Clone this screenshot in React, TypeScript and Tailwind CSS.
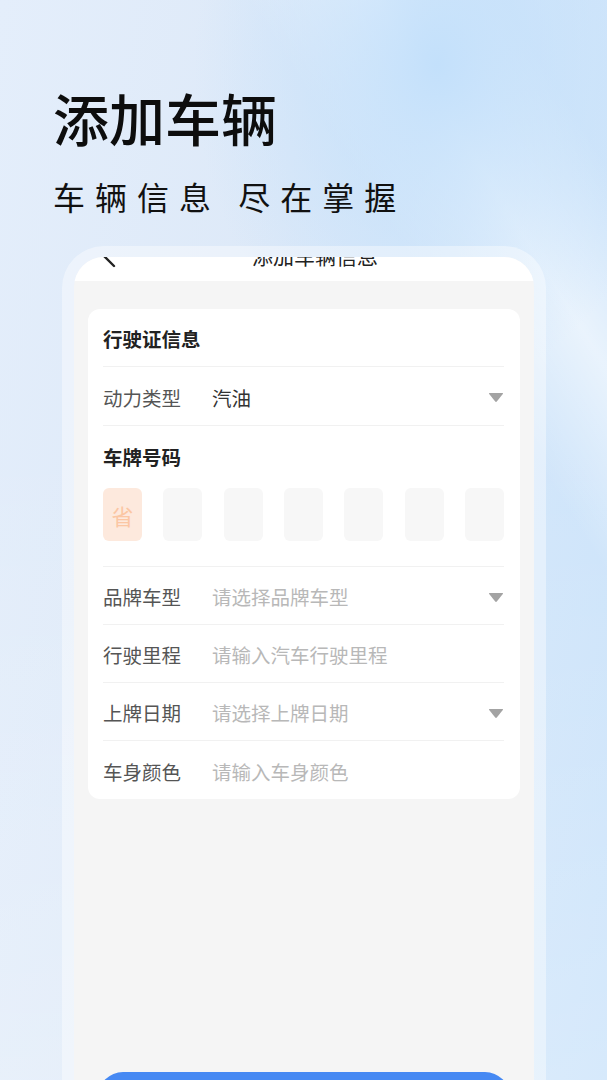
import React from "react";

const FONT = { fontFamily: '"Noto Sans CJK SC", "Noto Sans", sans-serif' };

function Caret() {
  return (
    <svg width="16" height="11" viewBox="0 0 16 11" className="shrink-0">
      <path d="M1.5 1 H14.5 Q15.5 1 14.8 2 L8.8 9.6 Q8 10.5 7.2 9.6 L1.2 2 Q0.5 1 1.5 1 Z" fill="#a3a3a3" />
    </svg>
  );
}

function Row({
  label,
  value,
  placeholder,
  caret,
  last,
  h = "h-[58px]",
}: {
  label: string;
  value?: string;
  placeholder?: string;
  caret?: boolean;
  last?: boolean;
  h?: string;
}) {
  return (
    <div className={`flex items-center pt-[3px] ${h} ${last ? "" : "border-b border-[#f1f1f1]"}`}>
      <div className="w-[109px] shrink-0 text-[19.5px] text-[#555555] leading-none">{label}</div>
      <div className="flex-1 text-[19.5px] leading-none">
        {value ? (
          <span className="text-[#333333]">{value}</span>
        ) : (
          <span className="text-[#b8b8b8]">{placeholder}</span>
        )}
      </div>
      {caret && <Caret />}
    </div>
  );
}

export default function App() {
  return (
    <div
      className="relative w-full h-[1080px] overflow-hidden flex flex-col bg-[radial-gradient(ellipse_40%_30%_at_72%_6%,#c3e0fb_0%,rgba(195,224,251,0)_100%),linear-gradient(58deg,rgba(255,255,255,0)_72%,rgba(255,255,255,0.55)_82%,rgba(255,255,255,0)_92%),linear-gradient(to_bottom,rgba(255,255,255,0)_40%,rgba(255,255,255,0.25)_100%),linear-gradient(100deg,#e4eefb_0%,#dde9f8_40%,#d2e6fa_75%,#c9e2fa_100%)]"
      style={FONT}
    >
      <div className="pl-[53px] pt-[89px]">
        <div className="text-[56px] leading-none font-medium text-[#0d0d0d]">添加车辆</div>
        <div className="mt-[35px] text-[32px] leading-none text-[#111111] tracking-[10px]">车辆信息 尽在掌握</div>
      </div>

      <div className="mt-[34px] ml-[62px] w-[484px] flex-1 rounded-t-[42px] bg-[rgba(255,255,255,0.4)] px-[12px] pt-[11px]">
        <div className="h-full rounded-t-[30px] overflow-hidden bg-[#f5f5f5] flex flex-col">
          <div className="h-[24px] bg-white overflow-hidden shrink-0">
            <div className="-mt-[26px] h-[50px] flex items-center relative">
              <svg width="14" height="24" viewBox="0 0 14 24" className="ml-[28px] shrink-0">
                <path d="M12 2 L2 12 L12 22" stroke="#222" strokeWidth="2.4" fill="none" strokeLinecap="round" />
              </svg>
              <div className="flex-1 text-center text-[21px] text-[#222] pr-[20px]">添加车辆信息</div>
            </div>
          </div>

          <div className="mt-[28px] mx-[14px] bg-white rounded-[12px] px-[15px] pr-[16px]">
            <div className="flex items-center pt-[3px] h-[58px] border-b border-[#f1f1f1] text-[19.5px] font-semibold text-[#222] leading-none">
              行驶证信息
            </div>
            <Row label="动力类型" value="汽油" caret h="h-[59px]" />
            <div className="border-b border-[#f1f1f1] pb-[25px]">
              <div className="flex items-center pt-[3px] h-[58px] text-[19.5px] font-semibold text-[#222] leading-none">车牌号码</div>
              <div className="mt-[4px] flex justify-between">
                <div className="w-[39px] h-[53px] rounded-[6px] bg-[#fde9dd] flex items-center justify-center text-[22px] text-[#fbc6a3] leading-none">
                  省
                </div>
                {[0, 1, 2, 3, 4, 5].map((i) => (
                  <div key={i} className="w-[39px] h-[53px] rounded-[6px] bg-[#f7f7f7]" />
                ))}
              </div>
            </div>
            <Row label="品牌车型" placeholder="请选择品牌车型" caret />
            <Row label="行驶里程" placeholder="请输入汽车行驶里程" />
            <Row label="上牌日期" placeholder="请选择上牌日期" caret />
            <Row label="车身颜色" placeholder="请输入车身颜色" last />
          </div>

          <div className="mt-[273px] mx-[24px] h-[50px] shrink-0 rounded-full bg-[#4689f3]" />
        </div>
      </div>
    </div>
  );
}
